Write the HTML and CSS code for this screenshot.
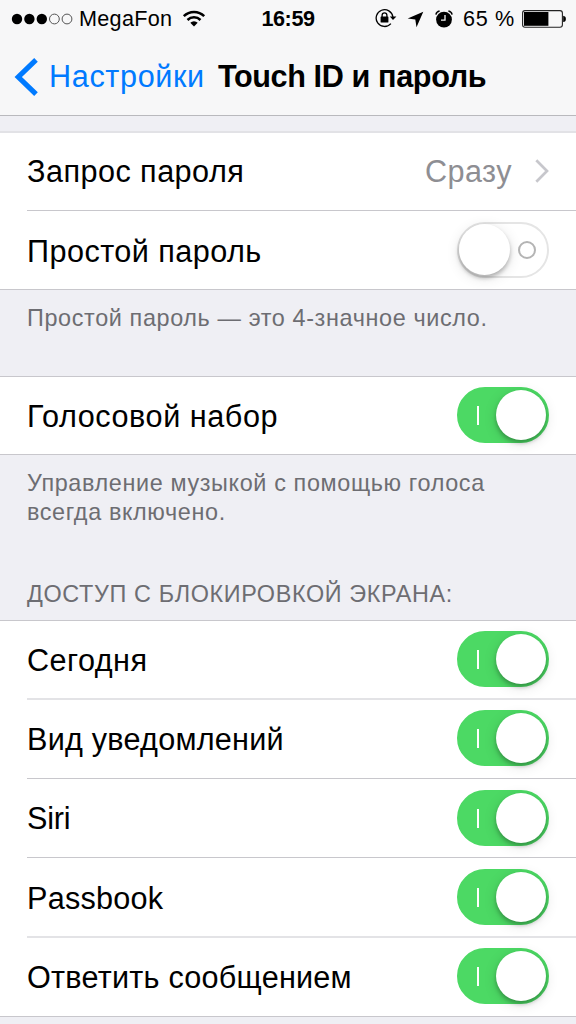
FILE: index.html
```html
<!DOCTYPE html>
<html lang="ru">
<head>
<meta charset="utf-8">
<title>Touch ID и пароль</title>
<link rel="stylesheet" href="styles.css">
</head>
<body>
<header class="navbar">
  <div class="status">
    <div class="status-left">
      <svg class="signal" width="62" height="12" viewBox="0 0 62 12"><circle cx="6" cy="6" r="5.2"/><circle cx="18.4" cy="6" r="5.2"/><circle cx="30.8" cy="6" r="5.2"/><g fill="none" stroke="#555" stroke-width="1"><circle cx="43.4" cy="6" r="4.9"/><circle cx="56" cy="6" r="4.9"/></g></svg>
      <span class="carrier">MegaFon</span>
      <svg class="wifi" width="24" height="18" viewBox="0 0 24 18"><g fill="none" stroke="#000" stroke-width="2.5"><path d="M1.8 6.2a14.4 14.4 0 0 1 20.4 0"/><path d="M5.5 10a9.2 9.2 0 0 1 13 0"/></g><path d="M8.3 12.7a5.2 5.2 0 0 1 7.4 0L12 16.4z"/></svg>
    </div>
    <span class="clock">16:59</span>
    <div class="status-right">
      <svg class="lock" width="22" height="20" viewBox="0 0 22 20"><path d="M17.9 9A8.4 8.4 0 1 0 15.9 15.6" fill="none" stroke="#000" stroke-width="1.3"/><path d="M14.8 8.6h6.6L18 12z"/><rect x="5.6" y="8.5" width="7.8" height="6" rx=".5"/><path d="M7.1 9V7.2a2.4 2.4 0 0 1 4.8 0V9" fill="none" stroke="#000" stroke-width="1.3"/></svg>
      <svg class="arrow" width="17" height="17" viewBox="0 0 17 17"><path d="M16.3.7L9.5 16.3 8.3 8.5.7 7.5z"/></svg>
      <svg class="alarm" width="18" height="18" viewBox="0 0 18 18"><circle cx="9" cy="9.6" r="7.9"/><path d="M.9 4.6Q1.4 1.6 4.6 1M13.4 1q3.2.6 3.7 3.6" fill="none" stroke="#000" stroke-width="1.4"/><path d="M10 5v5.2H6" fill="none" stroke="#f7f7f8" stroke-width="1.3"/></svg>
      <span class="percent">65 %</span>
      <svg class="battery" width="44" height="18" viewBox="0 0 44 18"><rect x=".6" y=".6" width="39.8" height="16.6" rx="2.4" fill="none" stroke="#222" stroke-width="1.1"/><rect x="2" y="2" width="24.4" height="13.8"/><path d="M41.2 5.7q2.7.5 2.7 3.2t-2.7 3.2z"/></svg>
    </div>
  </div>
  <div class="titlebar">
    <svg class="back-icon" width="24" height="38" viewBox="0 0 24 38"><path d="M22 1.9L4.3 19 22 36.1" fill="none" stroke="#007aff" stroke-width="5.2"/></svg>
    <span class="back">Настройки</span>
    <h1 class="title">Touch ID и пароль</h1>
  </div>
</header>
<main>
  <section class="group group-first">
    <div class="row"><span class="label l1">Запрос пароля</span><span class="value">Сразу</span><svg class="chevron" width="14" height="24" viewBox="0 0 14 24"><path d="M1.3 1.2L12 12 1.3 22.8" fill="none" stroke="#c7c7cc" stroke-width="2.7"/></svg></div>
    <div class="row row-low"><span class="label l2">Простой пароль</span><span class="switch off"><span class="mark"></span><span class="knob"></span></span></div>
  </section>
  <p class="note note-first">Простой пароль — это 4-значное число.</p>
  <section class="group group-voice">
    <div class="row"><span class="label l3">Голосовой набор</span><span class="switch on"><span class="mark"></span><span class="knob"></span></span></div>
  </section>
  <p class="note note-voice">Управление музыкой с помощью голоса<br>всегда включено.</p>
  <h2 class="heading">ДОСТУП С БЛОКИРОВКОЙ ЭКРАНА:</h2>
  <section class="group group-access">
    <div class="row row-low row-soft"><span class="label l4">Сегодня</span><span class="switch on"><span class="mark"></span><span class="knob"></span></span></div>
    <div class="row"><span class="label l5">Вид уведомлений</span><span class="switch on"><span class="mark"></span><span class="knob"></span></span></div>
    <div class="row"><span class="label l6">Siri</span><span class="switch on"><span class="mark"></span><span class="knob"></span></span></div>
    <div class="row row-low row-soft"><span class="label l7">Passbook</span><span class="switch on"><span class="mark"></span><span class="knob"></span></span></div>
    <div class="row row-low"><span class="label l8">Ответить сообщением</span><span class="switch on"><span class="mark"></span><span class="knob"></span></span></div>
  </section>
</main>
</body>
</html>
```
FILE: styles.css
```css
* { box-sizing: border-box; }
body { margin: 0; width: 576px; height: 1024px; overflow: hidden; background: #efeff4; color: #000; font-family: "Liberation Sans", Arial, sans-serif; font-size: 30.6px; }
svg { display: block; flex: none; }
span, h1, h2 { white-space: nowrap; }
.navbar { height: 116px; background: #f7f7f8; border-bottom: 1px solid #b9b9bd; }
.status { height: 38px; display: grid; grid-template-columns: 1fr auto 1fr; align-items: center; padding: 0 10px 0 11px; font-size: 21.6px; line-height: 38px; }
.status-left, .status-right { display: flex; align-items: center; }
.status-right { justify-content: flex-end; }
.signal { margin-right: 6px; }
.carrier { letter-spacing: .3px; }
.wifi { margin-left: 10px; }
.clock { font-weight: bold; font-size: 21.6px; letter-spacing: -.4px; margin-left: -1px; }
.lock { margin-top: -2px; }
.arrow { margin-left: 10px; }
.alarm { margin-left: 11px; margin-top: -1px; }
.percent { margin-left: 10px; letter-spacing: .7px; }
.battery { margin-left: 7px; }
.titlebar { height: 77px; display: flex; align-items: center; padding-left: 14px; line-height: 77px; }
.back { margin-left: 11px; color: #007aff; letter-spacing: .65px; }
.title { margin: 0 0 0 13px; font-size: 30.6px; font-weight: bold; letter-spacing: -.38px; }
.group { background: #fff; border-top: 1px solid #c8c7cc; border-bottom: 1px solid #c8c7cc; }
.group-first { margin-top: 15px; height: 159px; border-top: 2px solid #e2e2e6; }
.row { display: flex; align-items: center; height: 79px; margin-left: 27px; padding-right: 27px; border-bottom: 1px solid #c8c7cc; }
.row:last-child { border-bottom: 0; height: 78px; }
.row-soft { border-bottom: 2px solid #e3e3e6; }
.group-first .row:first-child { height: 78px; }
.group-access .row:nth-child(4) { height: 80px; }
.group-access .row:last-child { height: 76px; }
.label { flex: 1; letter-spacing: .46px; }
.l3 { letter-spacing: .56px; }
.l5, .l7, .l8 { letter-spacing: .24px; }
.l6 { letter-spacing: -.2px; }
.row-low .label { padding-top: 2px; }
.value { color: #8e8e93; letter-spacing: .45px; }
.chevron { margin-left: 23px; margin-bottom: 2px; }
.switch { position: relative; width: 92px; height: 56px; margin-bottom: 2px; border-radius: 28px; background: #fff; border: 2px solid #e5e5e5; }
.switch.off, .group-access .row:nth-child(n+3) .switch { margin-bottom: 0; }
.switch.on { background: #4cd964; border-color: #4cd964; }
.knob { position: absolute; left: 0; top: 0; width: 51px; height: 51px; border-radius: 50%; background: #fff; box-shadow: 0 3px 4px rgba(0,0,0,.26), 0 3px 14px rgba(0,0,0,.12); }
.on .knob { left: 37px; top: 1px; width: 50px; height: 50px; }
.mark { position: absolute; left: 59px; top: 17px; width: 18px; height: 18px; border: 2px solid #b4b4b4; border-radius: 50%; }
.on .mark { left: 18px; top: 17px; width: 2px; height: 19px; border: 0; border-radius: 0; background: #fff; }
.note, .heading { margin: 0; padding-left: 27px; color: #6d6d72; font-size: 23.4px; font-weight: normal; line-height: 29px; letter-spacing: .63px; }
.note-first { height: 86px; padding-top: 14px; }
.group-voice { height: 79px; }
.note-voice { height: 124px; padding-top: 14px; }
.heading { height: 41px; padding-top: 1px; }
.group-access { height: 397px; }
```
